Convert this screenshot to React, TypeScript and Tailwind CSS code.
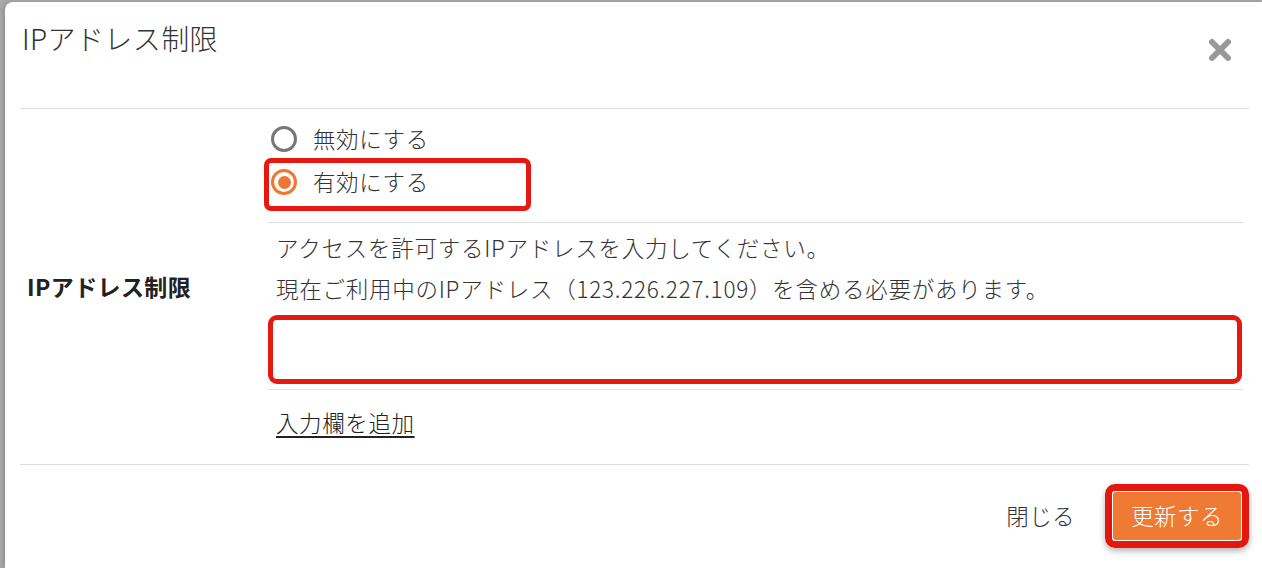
import React from 'react'

const font = { fontFamily: '"Noto Sans CJK JP", "Noto Sans", sans-serif' }

function Radio({ checked }: { checked?: boolean }) {
  return checked ? (
    <span className="flex h-[26px] w-[26px] items-center justify-center rounded-full border-[3px] border-[#ee7733] bg-white">
      <span className="h-[13px] w-[13px] rounded-full bg-[#ee7733]" />
    </span>
  ) : (
    <span className="h-[26px] w-[26px] rounded-full border-[3px] border-[#777777] bg-white" />
  )
}

export default function App() {
  return (
    <div
      className="h-[568px] w-[1262px] overflow-hidden bg-[#a9a9a9] pl-[5px] pt-[2px] text-[#333333] font-light"
      style={font}
    >
      <div className="h-full rounded-tl-[8px] bg-white px-[15px] pr-[13px] shadow-[-2px_0_4px_rgba(0,0,0,0.15)]">
        {/* header */}
        <div className="flex h-[107px] items-start justify-between border-b border-[#dddddd] pl-[2px] pt-[18px]">
          <h1 className="text-[28px] leading-[36px] font-light tracking-[0.4px] text-[#333333]">IPアドレス制限</h1>
          <svg width="24" height="24" viewBox="0 0 24 24" className="mr-[17px] mt-[18px]">
            <path d="M4 4L20 20M20 4L4 20" stroke="#999999" strokeWidth="6" strokeLinecap="round" />
          </svg>
        </div>

        {/* body */}
        <div className="grid grid-cols-[248px_1fr] border-b border-[#dddddd]">
          <div className="flex items-center pl-[7px] text-[23px] font-bold tracking-[0.4px] text-[#222222]">
            IPアドレス制限
          </div>
          <div className="mr-[6px]">
            <div className="flex flex-col gap-[7px] border-b border-[#dddddd] pb-[22px] pt-[12px] text-[22.5px] tracking-[0.6px]">
              <label className="flex h-[36px] items-center gap-[16px] pl-[3px]">
                <Radio />
                <span>無効にする</span>
              </label>
              <label className="relative flex h-[36px] items-center gap-[16px] pl-[3px]">
                <Radio checked />
                <span>有効にする</span>
                <span className="pointer-events-none absolute left-[-4px] top-[-6px] h-[53px] w-[267px] rounded-[7px] border-[5px] border-[#e5190f]" />
              </label>
            </div>

            <div className="border-b border-[#dddddd] pb-[5px] pt-[4px]">
              <p className="pl-[8px] text-[22.5px] leading-[41px] tracking-[0.75px]">
                アクセスを許可するIPアドレスを入力してください。
                <br />
                現在ご利用中のIPアドレス（123.226.227.109）を含める必要があります。
              </p>
              <div className="mr-[1px] mt-[6px] h-[69px] rounded-[9px] border-[5px] border-[#e5190f] bg-white">
                <input className="h-full w-full rounded-[4px] bg-transparent px-3 outline-none" />
              </div>
            </div>

            <div className="pb-[26px] pt-[16px]">
              <a className="pl-[8px] text-[22.5px] leading-[32px] tracking-[0.6px] text-[#222222] underline underline-offset-[4px]">
                入力欄を追加
              </a>
            </div>
          </div>
        </div>

        {/* footer */}
        <div className="flex items-center justify-end pt-[27px]">
          <button className="mr-[38px] text-[22.5px] tracking-[0.4px] text-[#333333]">閉じる</button>
          <div className="relative mr-[8px]">
            <button className="h-[48px] w-[128px] rounded-[3px] bg-[#ee7a33] text-[22.5px] tracking-[0.4px] text-white">
              更新する
            </button>
            <span className="pointer-events-none absolute inset-[-8px] rounded-[10px] border-[7px] border-[#e3170d] shadow-[0_3px_6px_rgba(0,0,0,0.3)]" />
          </div>
        </div>
      </div>
    </div>
  )
}
